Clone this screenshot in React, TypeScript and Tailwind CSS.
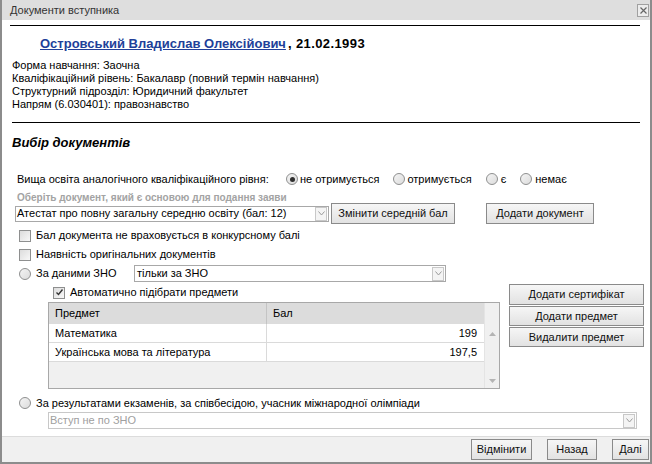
import React from 'react';

const font = "font-['Liberation_Sans',Arial,sans-serif]";

function Radio({ checked = false }: { checked?: boolean }) {
  return (
    <span className="relative flex h-[12px] w-[12px] flex-shrink-0 items-center justify-center rounded-full border border-[#8e8f8f] bg-gradient-to-br from-[#f4f4f4] to-[#dcdcdc]">
      {checked && <span className="h-[5px] w-[5px] rounded-full bg-[#2f2f2f]" />}
    </span>
  );
}

function Checkbox({ checked = false }: { checked?: boolean }) {
  return (
    <span className="flex h-[12px] w-[12px] flex-shrink-0 items-center justify-center border border-[#8e8f8f] bg-gradient-to-br from-[#dcdcdc] to-[#f8f8f8]">
      {checked && (
        <svg width="9" height="9" viewBox="0 0 9 9">
          <path d="M1.5 4.5 L3.5 6.5 L7.5 1.5" fill="none" stroke="#333" strokeWidth="1.4" />
        </svg>
      )}
    </span>
  );
}

function Arrow() {
  return (
    <span className="flex h-[14px] w-[12px] flex-shrink-0 items-center justify-center border border-[#c8c8c8] bg-[#f4f4f4]">
      <svg width="7" height="5" viewBox="0 0 7 5">
        <path d="M0.5 0.5 L3.5 4 L6.5 0.5" fill="none" stroke="#9a9a9a" strokeWidth="1" />
      </svg>
    </span>
  );
}

function Button({ children, className = '' }: { children: React.ReactNode; className?: string }) {
  return (
    <button className={`flex items-center justify-center border border-[#8a8a8a] bg-gradient-to-b from-[#f6f6f6] to-[#e2e2e2] text-[11px] text-[#111] ${className}`}>
      {children}
    </button>
  );
}

export default function App() {
  const subjects = [
    { name: 'Математика', score: '199' },
    { name: 'Українська мова та література', score: '197,5' },
  ];
  return (
    <div className={`${font} flex h-[464px] w-[652px] flex-col overflow-hidden border-x-2 border-b-2 border-[#8c8c8c] bg-white text-[11px] text-black`}>
      {/* Title bar */}
      <div className="flex h-[20px] flex-shrink-0 items-center justify-between bg-[#dedede] pl-[8px] pr-[1px]">
        <span className="text-[11px] text-[#333]">Документи вступника</span>
        <span className="flex h-[13px] w-[12px] items-center justify-center border border-[#a0a0a0] bg-[#ececec]">
          <svg width="7" height="7" viewBox="0 0 7 7">
            <path d="M0.5 0.5 L6.5 6.5 M6.5 0.5 L0.5 6.5" stroke="#666" strokeWidth="1.2" />
          </svg>
        </span>
      </div>

      <div className="flex flex-1 flex-col">
        <div className="ml-[8px] mr-[10px] mt-[5px] h-px bg-black" />

        <div className="mt-[10px] flex h-[16px] items-center pl-[38px] text-[13px] font-bold">
          <span className="text-[#213f99] underline">Островський Владислав Олексійович </span>
          <span className="ml-[2px] tracking-[0.4px]">, 21.02.1993</span>
        </div>

        <div className="mt-[7px] pl-[10px] leading-[13px]">
          <div>Форма навчання: Заочна</div>
          <div>Кваліфікаційний рівень: Бакалавр (повний термін навчання)</div>
          <div>Структурний підрозділ: Юридичний факультет</div>
          <div>Напрям (6.030401): правознавство</div>
        </div>

        <div className="ml-[10px] mr-[10px] mt-[11px] h-px bg-black" />

        <div className="mt-[12px] h-[16px] pl-[10px] text-[13px] font-bold italic leading-[16px]">Вибір документів</div>

        <div className="mt-[20px] flex h-[16px] items-center pl-[15px]">
          <span className="w-[269px]">Вища освіта аналогічного кваліфікаційного рівня:</span>
          <span className="flex items-center gap-[2px]"><Radio checked />не отримується</span>
          <span className="ml-[14px] flex items-center gap-[2px]"><Radio />отримується</span>
          <span className="ml-[14px] flex items-center gap-[3px]"><Radio />є</span>
          <span className="ml-[14px] flex items-center gap-[3px]"><Radio />немає</span>
        </div>

        <div className="mt-[5px] h-[12px] pl-[15px] text-[10px] font-bold leading-[12px] text-[#a3a3a3]">
          Оберіть документ, який є основою для подання заяви
        </div>

        <div className="mt-[-1px] flex h-[21px] items-center pl-[13px]">
          <div className="flex h-[16px] w-[314px] items-center justify-between border border-[#a8a8a8] pl-[1px] pr-[1px]">
            <span>Атестат про повну загальну середню освіту (бал: 12)</span>
            <Arrow />
          </div>
          <Button className="ml-[2px] h-[21px] w-[124px]">Змінити середній бал</Button>
          <Button className="ml-[31px] h-[21px] w-[108px]">Додати документ</Button>
        </div>

        <div className="mt-[2px] flex h-[19px] items-center gap-[5px] pl-[17px]">
          <Checkbox />
          <span>Бал документа не враховується в конкурсному балі</span>
        </div>
        <div className="flex h-[19px] items-center gap-[5px] pl-[17px]">
          <Checkbox />
          <span>Наявність оригінальних документів</span>
        </div>
        <div className="flex h-[19px] items-center pl-[17px]">
          <Radio />
          <span className="ml-[5px] w-[98px]">За даними ЗНО</span>
          <div className="flex h-[17px] w-[312px] items-center justify-between border border-[#a8a8a8] pl-[2px] pr-[1px]">
            <span>тільки за ЗНО</span>
            <Arrow />
          </div>
        </div>

        <div className="flex">
          <div className="ml-[46px] w-[452px]">
            <div className="flex h-[19px] items-center gap-[5px] pl-[5px]">
              <Checkbox checked />
              <span>Автоматично підібрати предмети</span>
            </div>
            <div className="flex h-[87px] border border-[#a8a8a8] bg-[#f0f0f0]">
              <div className="flex-1">
                <div className="flex h-[21px] bg-[#dcdcdc]">
                  <div className="flex w-[218px] items-center border-r border-[#c4c4c4] pl-[6px]">Предмет</div>
                  <div className="flex flex-1 items-center pl-[6px]">Бал</div>
                </div>
                {subjects.map(s => (
                  <div key={s.name} className="flex h-[19px] border-b border-[#dadada] bg-white">
                    <div className="flex w-[218px] items-center border-r border-[#dadada] pl-[6px]">{s.name}</div>
                    <div className="flex flex-1 items-center justify-end pr-[7px]">{s.score}</div>
                  </div>
                ))}
              </div>
              <div className="flex w-[15px] flex-col items-center justify-between border-l border-[#e4e4e4] pb-[5px] pt-[29px]">
                <svg width="7" height="4" viewBox="0 0 7 4"><path d="M0 4 L3.5 0 L7 4 Z" fill="#b4b4b4" /></svg>
                <svg width="7" height="4" viewBox="0 0 7 4"><path d="M0 0 L3.5 4 L7 0 Z" fill="#b4b4b4" /></svg>
              </div>
            </div>
          </div>
          <div className="ml-[9px] mt-[1px] flex w-[135px] flex-col gap-px">
            <Button className="h-[21px] w-full">Додати сертифікат</Button>
            <Button className="h-[20px] w-full">Додати предмет</Button>
            <Button className="h-[20px] w-full">Видалити предмет</Button>
          </div>
        </div>

        <div className="mt-[5px] flex h-[18px] items-center pl-[17px]">
          <Radio />
          <span className="ml-[5px]">За результатами екзаменів, за співбесідою, учасник міжнародної олімпіади</span>
        </div>
        <div className="ml-[46px] flex h-[17px] w-[589px] items-center justify-between border border-[#c8c8c8] pl-[1px] pr-[1px] text-[#a0a0a0]">
          <span>Вступ не по ЗНО</span>
          <Arrow />
        </div>
      </div>

      <div className="flex h-[26px] flex-shrink-0 items-center justify-end gap-[15px] border-t border-[#dcdcdc] bg-[#f0f0f0] pr-[1px]">
        <Button className="h-[21px] w-[61px]">Відмінити</Button>
        <Button className="h-[21px] w-[50px]">Назад</Button>
        <Button className="h-[21px] w-[37px]">Далі</Button>
      </div>
    </div>
  );
}
